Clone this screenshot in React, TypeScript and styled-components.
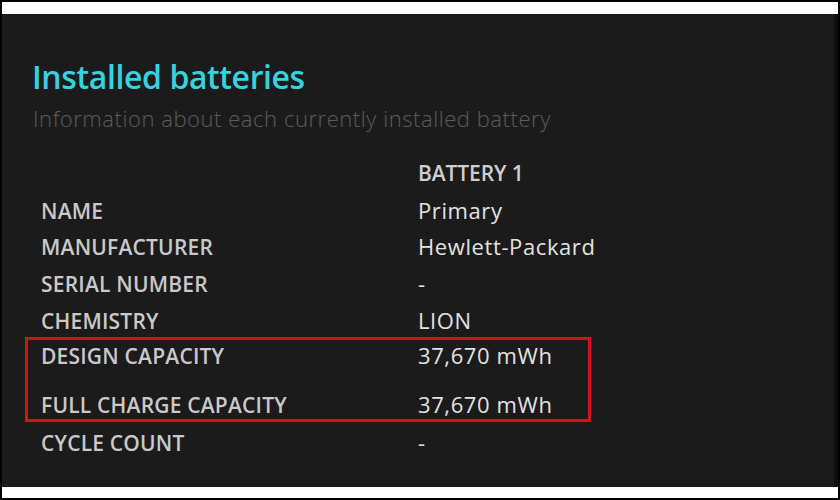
import React from "react";
import styled, { createGlobalStyle } from "styled-components";

const Global = createGlobalStyle`
  html, body { margin: 0; padding: 0; background: #fff; }
  * { box-sizing: border-box; }
`;

const Frame = styled.div`
  width: 840px;
  height: 500px;
  border: 2px solid #000;
  background: #fff;
  padding: 12px 0 11px 0;
  display: flex;
`;

const Panel = styled.div`
  flex: 1;
  background: #1b1b1b;
  border-right: 4px solid #0e0e0e;
  padding: 43px 0 0 30px;
  font-family: "Open Sans", "Noto Sans", sans-serif;
  display: flex;
  flex-direction: column;
`;

const Title = styled.h1`
  margin: 0;
  font-size: 32px;
  line-height: 40px;
  font-weight: 600;
  color: #35d3df;
  letter-spacing: -0.4px;
`;

const Subtitle = styled.p`
  margin: 7px 0 0 1px;
  font-size: 22px;
  line-height: 28px;
  font-weight: 300;
  color: #5c5c5c;
  letter-spacing: 0.55px;
`;

const Table = styled.div`
  margin: 24px 0 0 9px;
  display: flex;
  flex-direction: column;
`;

const Row = styled.div<{ $h?: number; $mt?: number }>`
  display: grid;
  grid-template-columns: 377px 1fr;
  align-items: baseline;
  height: ${(p) => p.$h ?? 36.7}px;
  line-height: ${(p) => p.$h ?? 36.7}px;
  margin-top: ${(p) => p.$mt ?? 0}px;
  flex-shrink: 0;
`;

const Label = styled.div`
  font-size: 21px;
  font-weight: 600;
  color: #c9c9c9;
  text-transform: uppercase;
  letter-spacing: 0.2px;
`;

const Head = styled.div`
  font-size: 21px;
  font-weight: 600;
  color: #cfcfcf;
  text-transform: uppercase;
  letter-spacing: -0.1px;
`;

const Value = styled.div`
  font-size: 22px;
  font-weight: 400;
  color: #e2e2e2;
  letter-spacing: 0.6px;
`;

const Highlight = styled.div`
  width: 566px;
  margin: -1.6px 0 0 -16px;
  padding: 0 0 0 13px;
  border: 3px solid #d4121a;
  display: flex;
  flex-direction: column;
  flex-shrink: 0;
`;

const rowsTop = [
  ["NAME", "Primary"],
  ["MANUFACTURER", "Hewlett-Packard"],
  ["SERIAL NUMBER", "-"],
  ["CHEMISTRY", "LION"],
];

export default function App() {
  return (
    <>
      <Global />
      <Frame>
        <Panel>
          <Title>Installed batteries</Title>
          <Subtitle>Information about each currently installed battery</Subtitle>
          <Table>
            <Row $h={35.5}>
              <div />
              <Head>BATTERY 1</Head>
            </Row>
            {rowsTop.map(([l, v]) => (
              <Row key={l}>
                <Label>{l}</Label>
                <Value>{v}</Value>
              </Row>
            ))}
            <Highlight>
              <Row $h={31.7}>
                <Label>DESIGN CAPACITY</Label>
                <Value>37,670 mWh</Value>
              </Row>
              <Row $h={30} $mt={18.15}>
                <Label>FULL CHARGE CAPACITY</Label>
                <Value>37,670 mWh</Value>
              </Row>
            </Highlight>
            <Row $mt={1.65}>
              <Label>CYCLE COUNT</Label>
              <Value>-</Value>
            </Row>
          </Table>
        </Panel>
      </Frame>
    </>
  );
}
